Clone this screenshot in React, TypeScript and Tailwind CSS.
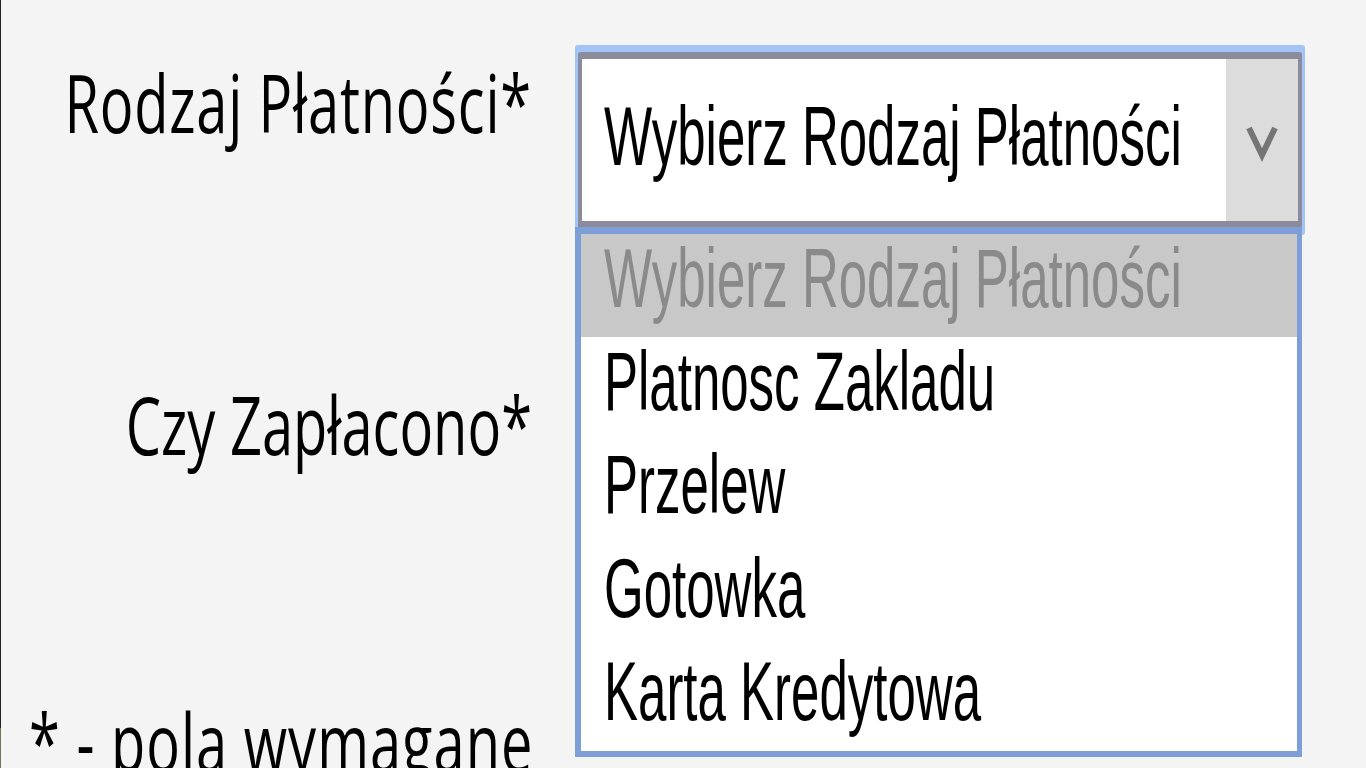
const options = ["Wybierz Rodzaj Płatności", "Platnosc Zakladu", "Przelew", "Gotowka", "Karta Kredytowa"];

function Label({ children, className = "" }: { children: React.ReactNode; className?: string }) {
  return (
    <span className={`block scale-y-[1.45] font-['Open_Sans',sans-serif] text-[56px] leading-none text-black ${className}`}>
      {children}
    </span>
  );
}

function Chevron() {
  return (
    <svg width="38" height="38" viewBox="0 0 38 38" fill="none">
      <path d="M6 4 L19 31 L32 4" stroke="#757575" strokeWidth="6" strokeLinejoin="miter" />
    </svg>
  );
}

export default function App() {
  return (
    <div className="relative flex h-[768px] w-[1366px] overflow-hidden bg-[#f4f4f4]">
      <div className="flex w-px flex-col">
        <div className="h-[728px] bg-[#222222]" />
        <div className="flex-1 bg-[#73775a]" />
      </div>

      <div className="flex flex-1 flex-col">
        <div className="flex pt-[45px]">
          <div className="w-[531px] pt-[27.5px] text-right">
            <Label className="tracking-[0.8px]">Rodzaj Płatności*</Label>
          </div>
          <div className="ml-[43px] w-[730px] rounded-[3px] bg-[#a3c4f7] px-[3px] pt-[7px] pb-[7px]">
            <div className="flex h-[176px] rounded-[3px] border-x-4 border-y-[7px] border-[#8b8b9b] bg-white">
              <div className="flex flex-1 items-center pb-[8px] pl-[22px]">
                <span className="block scale-y-[1.64] font-['Liberation_Sans',Arial,sans-serif] text-[51px] leading-none text-black">
                  {options[0]}
                </span>
              </div>
              <div className="flex w-[72px] items-center justify-center bg-[#dcdcdc] pt-[6px]">
                <Chevron />
              </div>
            </div>
          </div>
        </div>

        <div className="mt-[160px] w-[531px] text-right">
          <Label>Czy Zapłacono*</Label>
        </div>

        <div className="mt-[261px] pl-[28px]">
          <Label className="tracking-[1px]">* - pola wymagane</Label>
        </div>
      </div>

      <div className="absolute top-[227px] left-[575px] flex h-[530px] w-[727px] flex-col border-t-[7px] border-r-[5px] border-b-[6px] border-l-[6px] border-[#7d9ed6] bg-white">
        {options.map((o, i) => (
          <div
            key={o}
            className={`flex h-[103.4px] items-center pb-[15px] pl-[23px] ${i === 0 ? "bg-[#c8c8c8] text-[#8a8a8a]" : "text-black"}`}
          >
            <span className="block scale-y-[1.64] font-['Liberation_Sans',Arial,sans-serif] text-[51px] leading-none">
              {o}
            </span>
          </div>
        ))}
      </div>
    </div>
  );
}
